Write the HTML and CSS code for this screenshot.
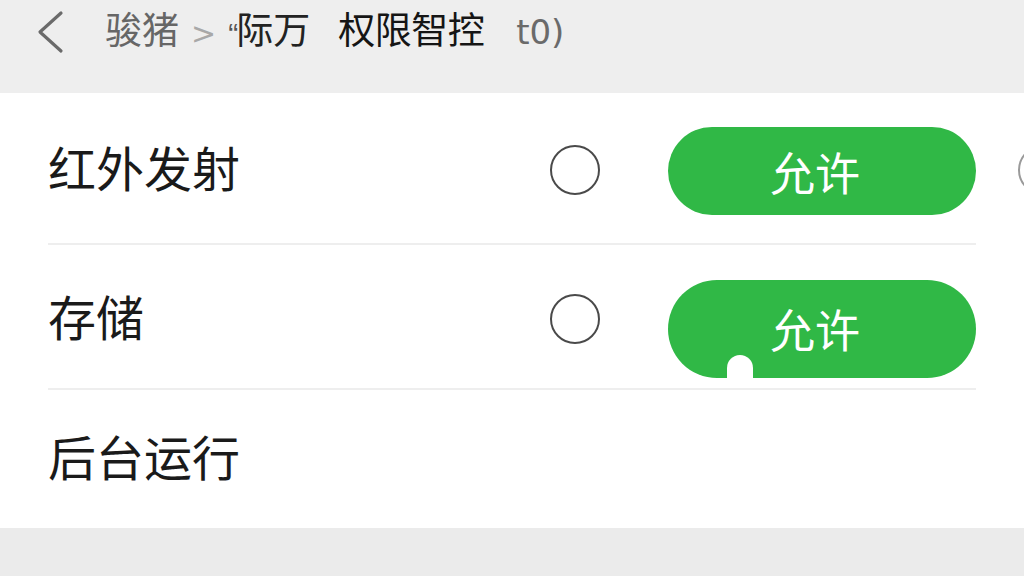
FILE: index.html
```html
<!DOCTYPE html>
<html lang="zh">
<head>
<meta charset="utf-8">
<link rel="stylesheet" href="styles.css">
</head>
<body>
<div class="page">
  <header class="topbar">
    <svg class="back" width="30" height="44" viewBox="0 0 30 44"><polyline points="25,3 4,22 25,41" fill="none" stroke="#6a6a6a" stroke-width="3.2" stroke-linecap="round" stroke-linejoin="round"/></svg>
    <div class="crumbs">
      <span class="crumb-muted">骏猪</span>
      <span class="crumb-sep">&gt;</span>
      <span class="crumb-quote">“</span><span class="crumb-mid">际万</span>
      <span class="crumb-title">权限智控</span>
      <span class="crumb-tail">t0)</span>
    </div>
  </header>
  <main class="card">
    <div class="row row-first">
      <div class="row-inner">
        <span class="label">红外发射</span>
        <span class="radio"></span>
        <span class="pill">允许</span>
        <span class="radio radio-edge"></span>
      </div>
    </div>
    <div class="row row-second">
      <div class="row-inner">
        <span class="label">存储</span>
        <span class="radio"></span>
        <span class="pill pill-tall">允许</span>
      </div>
    </div>
    <div class="row row-third">
      <div class="row-inner row-inner-last">
        <span class="label">后台运行</span>
      </div>
    </div>
  </main>
</div>
</body>
</html>
```
FILE: styles.css
```css
html, body {
  margin: 0;
  padding: 0;
  width: 1024px;
  height: 576px;
  overflow: hidden;
  background: #ebebeb;
  font-family: "Noto Sans CJK SC", "Noto Sans", sans-serif;
}
.page {
  display: flex;
  flex-direction: column;
  width: 1024px;
  height: 576px;
  overflow: hidden;
}
.topbar {
  height: 93px;
  background: #eeeeee;
  display: flex;
  align-items: flex-start;
  padding-left: 36px;
  box-sizing: border-box;
}
.back {
  margin-top: 10px;
  flex: none;
}
.crumbs {
  display: flex;
  align-items: baseline;
  margin-left: 39px;
  margin-top: 0;
  font-size: 37px;
  line-height: 56px;
  white-space: nowrap;
}
.crumb-muted { color: #666666; }
.crumb-sep {
  color: #a8a8a8;
  margin: 0 12px 0 12px;
  font-size: 30px;
  font-family: "DejaVu Sans", sans-serif;
}
.crumb-quote {
  color: #555555;
  font-family: "Liberation Sans", sans-serif;
  font-size: 30px;
  margin-right: -2px;
}
.crumb-mid { color: #222222; }
.crumb-title { color: #151515; margin-left: 28px; letter-spacing: -0.5px; }
.crumb-tail { color: #6a6a6a; margin-left: 32px; font-family: "DejaVu Sans", sans-serif; font-size: 34px; }
.card {
  background: #ffffff;
  display: flex;
  flex-direction: column;
}
.row {
  padding-left: 48px;
  display: flex;
}
.row-inner {
  display: flex;
  align-items: center;
  border-bottom: 2px solid #eeeeee;
  width: 928px;
  flex: none;
}
.row-inner-last { border-bottom: none; }
.row-first .row-inner { height: 150px; }
.row-second .row-inner { height: 143px; }
.row-third .row-inner { height: 138px; }
.label {
  font-size: 48px;
  color: #1a1a1a;
  line-height: 1;
  width: 502px;
  flex: none;
  margin-top: -4px;
}
.row-third .label { margin-top: -8px; }
.radio {
  width: 46px;
  height: 46px;
  border: 2.5px solid #4a4a4a;
  border-radius: 50%;
  flex: none;
  box-sizing: content-box;
  margin-top: 4px;
}
.pill {
  position: relative;
  margin-left: 68px;
  margin-top: 6px;
  width: 308px;
  height: 88px;
  border-radius: 44px;
  background: #30b846;
  color: #ffffff;
  font-size: 45px;
  display: flex;
  align-items: center;
  justify-content: center;
  flex: none;
  padding-right: 14px;
  box-sizing: border-box;
}
.pill-tall {
  height: 98px;
  border-radius: 49px;
  margin-top: 24px;
}
.pill-tall::after {
  content: "";
  position: absolute;
  left: 59px;
  bottom: -6px;
  width: 26px;
  height: 29px;
  border-radius: 13px 13px 4px 4px;
  background: #ffffff;
}
.radio-edge {
  margin-left: 42px;
  border-color: #9a9a9a;
}
```
